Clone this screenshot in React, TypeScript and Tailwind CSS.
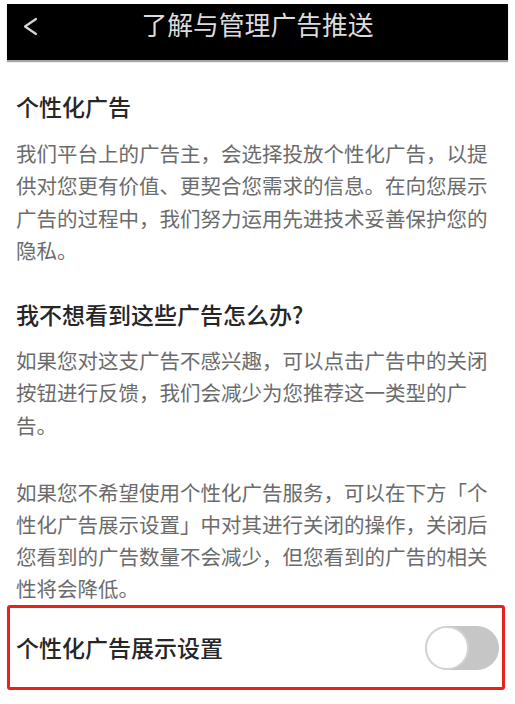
const font = { fontFamily: '"Noto Sans CJK SC", "Noto Sans", sans-serif' }

export default function App() {
  return (
    <div className="min-h-screen bg-white px-[7px] pt-[4px]" style={font}>
      {/* Header */}
      <header className="relative flex h-[56px] items-start justify-center bg-black pt-[7px] shadow-[0_2px_1px_rgba(0,0,0,0.35)]">
        <svg className="absolute left-[13px] top-[12px] h-[22px] w-[20px]" viewBox="0 0 20 22" fill="none">
          <path d="M16 3 L5 10.5 L16 18" stroke="#d6d6d6" strokeWidth="2.2" strokeLinecap="round" strokeLinejoin="round" />
        </svg>
        <h1 className="text-[25.8px] leading-none text-[#dcdcdc]">了解与管理广告推送</h1>
      </header>

      {/* Content */}
      <main className="px-[9px] pt-[30px]">
        <h2 className="text-[23px] leading-[32px] font-medium text-[#262626]">个性化广告</h2>
        <p className="mt-[15px] text-[20.5px] leading-[32.3px] text-[#6b6b6b]">
          我们平台上的广告主，会选择投放个性化广告，以提供对您更有价值、更契合您需求的信息。在向您展示广告的过程中，我们努力运用先进技术妥善保护您的隐私。
        </p>

        <h2 className="mt-[32px] text-[23px] leading-[32px] font-medium text-[#262626]">我不想看到这些广告怎么办?</h2>
        <p className="mt-[14px] text-[20.5px] leading-[32.3px] text-[#6b6b6b]">
          如果您对这支广告不感兴趣，可以点击广告中的关闭按钮进行反馈，我们会减少为您推荐这一类型的广告。
        </p>
        <p className="mt-[35px] text-[20.5px] leading-[32px] text-[#6b6b6b]">
          如果您不希望使用个性化广告服务，可以在下方「个性化广告展示设置」中对其进行关闭的操作，关闭后您看到的广告数量不会减少，但您看到的广告的相关性将会降低。
        </p>
      </main>

      {/* Setting row */}
      <div className="mr-[3px] mt-[1px] flex h-[85px] items-center justify-between rounded-[3px] border-[3px] border-[#e8211b] pl-[6px] pr-[3px]">
        <span className="text-[23px] font-medium text-[#262626]">个性化广告展示设置</span>
        <div className="flex h-[44px] w-[74px] items-center rounded-full bg-[#c6c6c6]">
          <div className="h-[44px] w-[44px] rounded-full border-[2px] border-[#d4d4d4] bg-white" />
        </div>
      </div>
    </div>
  )
}
